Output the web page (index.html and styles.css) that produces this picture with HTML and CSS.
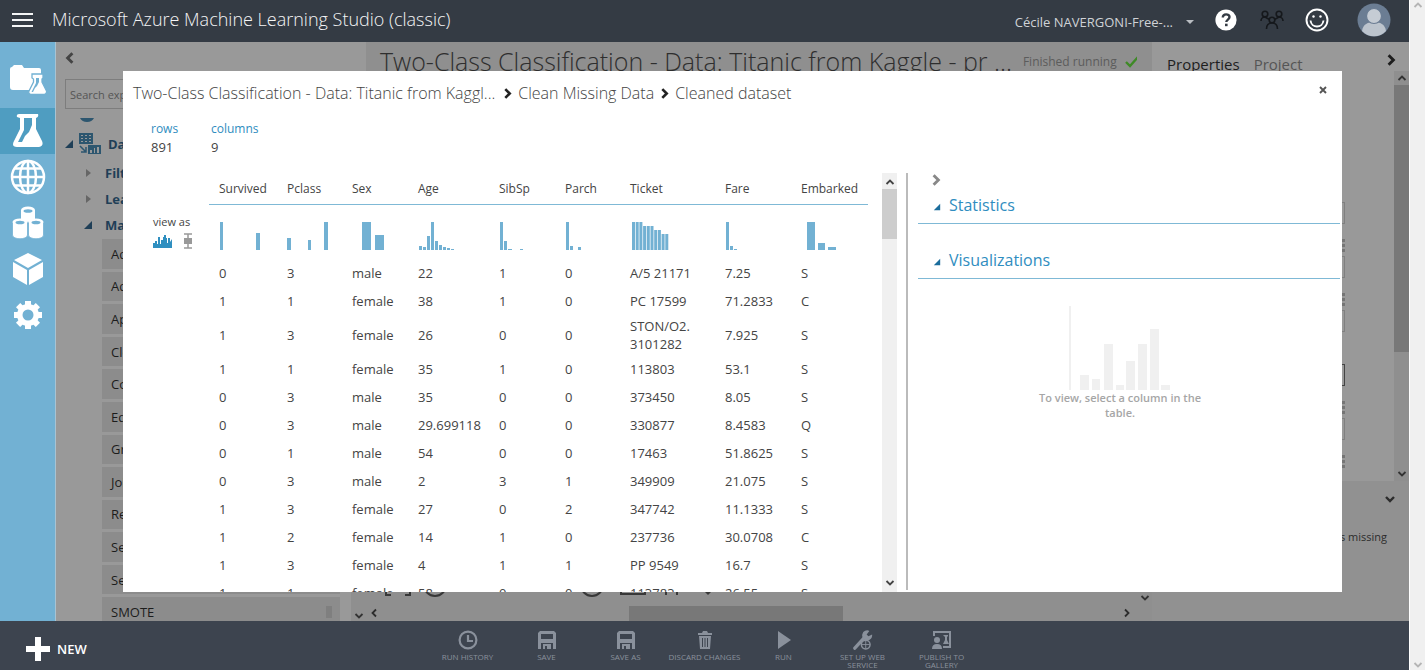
FILE: index.html
```html
<!DOCTYPE html>
<html lang="en">
<head>
<meta charset="utf-8">
<title>Microsoft Azure Machine Learning Studio (classic)</title>
<link rel="stylesheet" href="styles.css">
</head>
<body>
<svg class="defs" aria-hidden="true">
  <symbol id="chev-r" viewBox="0 0 10 10"><path d="M3 1l4 4-4 4" fill="none" stroke="currentColor" stroke-width="2.4"/></symbol>
  <symbol id="chev-l" viewBox="0 0 10 10"><path d="M7 1L3 5l4 4" fill="none" stroke="currentColor" stroke-width="2.4"/></symbol>
  <symbol id="thin-u" viewBox="0 0 10 10"><path d="M1.500 7L5 3.500 8.500 7" fill="none" stroke="currentColor" stroke-width="1.800"/></symbol>
  <symbol id="thin-d" viewBox="0 0 10 10"><path d="M1.500 3L5 6.500 8.500 3" fill="none" stroke="currentColor" stroke-width="1.800"/></symbol>
  <symbol id="thin-l" viewBox="0 0 10 10"><path d="M7 1.500L3.500 5 7 8.500" fill="none" stroke="currentColor" stroke-width="1.800"/></symbol>
  <symbol id="thin-r" viewBox="0 0 10 10"><path d="M3 1.500L6.500 5 3 8.500" fill="none" stroke="currentColor" stroke-width="1.800"/></symbol>
  <symbol id="tri-open" viewBox="0 0 10 10"><path d="M9 1v8H1z" fill="currentColor"/></symbol>
  <symbol id="tri-closed" viewBox="0 0 10 10"><path d="M3 1l5 4-5 4z" fill="currentColor"/></symbol>
  <symbol id="dots" viewBox="0 0 3 13"><path d="M0 0h3v3H0zM0 5h3v3H0zM0 10h3v3H0z" fill="currentColor"/></symbol>
  <symbol id="floppy" viewBox="0 0 20 20"><path fill="currentColor" fill-rule="evenodd" d="M3 1h14l2 2v16h-3v-6H4v6H1V3zM4 4v5h12V4zM6 14h8v5h-4v-3H8v3H6z"/></symbol>
</svg>

<div class="window">
<div class="app">
  <header class="topbar">
    <button class="icon-btn menu" aria-label="Menu"><svg width="22" height="16" viewBox="0 0 22 16"><path d="M0 2h21M0 8h21M0 14h21" stroke="#f4f5f6" stroke-width="2"/></svg></button>
    <h1 class="brand">Microsoft Azure Machine Learning Studio (classic)</h1>
    <button class="workspace">Cécile NAVERGONI-Free-...<svg width="8" height="5" viewBox="0 0 8 5"><path d="M0 0h8L4 4z" fill="#b9bdc2"/></svg></button>
    <button class="icon-btn help" aria-label="Help"><svg width="22" height="22" viewBox="0 0 22 22"><circle cx="11" cy="11" r="10.600" fill="#fff"/><path d="M7.800 8.600c0-4.300 6.700-4 6.700-.5 0 2.500-3.200 2.500-3.200 5" fill="none" stroke="#343b44" stroke-width="2.400"/><path d="M10 14.700h2.600v2.500H10z" fill="#343b44"/></svg></button>
    <button class="icon-btn people" aria-label="Community"><svg width="24" height="22" viewBox="0 0 24 22" fill="none" stroke="#15181c" stroke-width="1.600"><circle cx="5" cy="5" r="2.800"/><circle cx="19" cy="5" r="2.800"/><circle cx="12" cy="11" r="2.800"/><path d="M1 12c0-2 1.500-4 4-4l4.500 2.500M23 12c0-2-1.500-4-4-4l-4.500 2.500M6.500 20c0-4 2-6 5.500-6s5.500 2 5.500 6"/></svg></button>
    <button class="icon-btn smile" aria-label="Feedback"><svg width="24" height="24" viewBox="0 0 24 24" fill="none" stroke="#fff" stroke-width="1.900"><circle cx="12" cy="12" r="10.500"/><path d="M5.500 12.500c1 8 12 8 13 0"/><circle cx="8.500" cy="8.500" r="1.200" fill="#fff" stroke="none"/><circle cx="15.500" cy="8.500" r="1.200" fill="#fff" stroke="none"/></svg></button>
    <button class="icon-btn avatar" aria-label="Account"><svg width="34" height="34" viewBox="0 0 34 34"><circle cx="17" cy="17" r="16.500" fill="#6b7d93"/><path d="M5 28c1-7 6-9 12-9s11 2 12 9c-6 7-18 7-24 0z" fill="#bcc4cd"/><circle cx="17" cy="13" r="7.500" fill="#c5ccd4" stroke="#6b7d93" stroke-width="1.200"/></svg></button>
  </header>

  <div class="main">
    <nav class="rail" aria-label="Sections">
      <a href="#projects" class="projects" aria-label="Projects"><svg width="38" height="32" viewBox="0 0 38 32"><path fill="#fff" d="M1 5q0-2 2-2l2-2h8l2 3h15q2 0 2 2v20H4q-3 0-3-3z"/><path d="M23 10h11v4l-1 1v3l4.500 9q.5 3-2 3.500H22q-3-.5-2-3.500l4.500-9v-3l-1.500-1z" fill="#fff" stroke="#72b1d3" stroke-width="1.300"/><path d="M27 14h3v4l-2 4-2 2-2 4h-1.500l4.500-9z" fill="#72b1d3"/></svg></a>
      <a href="#experiments" class="active" aria-label="Experiments" aria-current="page"><svg width="32" height="36" viewBox="0 0 32 36"><path fill="#fff" fill-rule="evenodd" d="M7 1q-3 0-2 3l3 1v11L2 28q-3 6 3 6h22q5-1 3-6l-6-12V5q3-1 2-4zM12 5h8v7l-3 7-4 4-3 6H6l6-12z"/></svg></a>
      <a href="#web-services" aria-label="Web services"><svg width="36" height="36" viewBox="0 0 36 36" fill="none" stroke="#fff" stroke-width="2.500"><circle cx="18" cy="18" r="16"/><ellipse cx="18" cy="18" rx="8" ry="16"/><path d="M18 2v32M2 18h32M5 9.500h26M5 26.500h26"/></svg></a>
      <a href="#datasets" aria-label="Datasets"><svg width="32" height="34" viewBox="0 0 32 34" fill="#fff"><path d="M9 4v10c0 4 14 4 14 0V4z"/><ellipse cx="16" cy="4" rx="7" ry="3.500"/><path d="M.5 16v13c0 5 15 5 15 0V16zM16.500 16v13c0 5 15 5 15 0V16z" stroke="#72b1d3" stroke-width=".8"/><ellipse cx="8" cy="16" rx="7.500" ry="3.500"/><ellipse cx="24" cy="16" rx="7.500" ry="3.500"/><g fill="#72b1d3"><ellipse cx="16" cy="5" rx="4.500" ry="1.800"/><ellipse cx="8" cy="16.500" rx="4.500" ry="1.800"/><ellipse cx="24" cy="16.500" rx="4.500" ry="1.800"/></g></svg></a>
      <a href="#models" aria-label="Trained models"><svg width="32" height="34" viewBox="0 0 32 34" fill="#fff"><path d="M16 1l14 7-14 8L2 8zM1 10l14 8v15L1 25zM31 10l-14 8v15l14-8z"/></svg></a>
      <a href="#settings" aria-label="Settings"><svg width="30" height="30" viewBox="0 0 30 30"><g fill="#fff"><path d="M12 1h6v28h-6z"/><path d="M12 1h6v28h-6z" transform="rotate(45 15 15)"/><path d="M12 1h6v28h-6z" transform="rotate(90 15 15)"/><path d="M12 1h6v28h-6z" transform="rotate(135 15 15)"/><circle cx="15" cy="15" r="11"/></g><circle cx="15" cy="15" r="5.500" fill="#72b1d3"/></svg></a>
    </nav>

    <aside class="toolbox" aria-label="Experiment items">
      <button class="icon-btn collapse" aria-label="Collapse"><svg width="12" height="12"><use href="#chev-l"/></svg></button>
      <input class="search" type="search" placeholder="Search experiment items" aria-label="Search experiment items">
      <div class="toolbox-body">
        <div class="tree">
          <svg class="tree-cut" width="14" height="4" viewBox="0 0 14 4"><path d="M0 0h14q-2 4-7 4T0 0z" fill="#2d566f"/></svg>
          <button class="group"><svg width="10" height="10"><use href="#tri-open"/></svg><svg width="22" height="22" viewBox="0 0 22 22"><path fill="#2d566f" fill-rule="evenodd" d="M0 0h14v11H0zM2 2v1h2V2zM6 2v1h2V2zM10 2v1h2V2zM2 5v1h2V5zM6 5v1h2V5zM10 5v1h2V5zM2 8v1h2V8zM6 8v1h2V8zM10 8v1h2V8zM9 12h13v9H9zM11 17v3h2v-3zM15 15v5h1v-5zM18 14v6h2v-6z"/><path d="M1 13l6 6M7 14v5H2" stroke="#2d566f" stroke-width="1.500" fill="none"/></svg>Data Transformation</button>
          <button class="branch closed"><svg width="10" height="10"><use href="#tri-closed"/></svg>Filter</button>
          <button class="branch closed"><svg width="10" height="10"><use href="#tri-closed"/></svg>Learning with Counts</button>
          <button class="branch"><svg width="10" height="10"><use href="#tri-open"/></svg>Manipulation</button>
          <ul class="modules">
            <li>Add Columns</li><li>Add Rows</li><li>Apply SQL Transformation</li><li>Clean Missing Data</li><li>Convert to Indicator Values</li><li>Edit Metadata</li><li>Group Categorical Values</li><li>Join Data</li><li>Remove Duplicate Rows</li><li>Select Columns in Dataset</li><li>Select Columns Transform</li><li>SMOTE<span class="grip"></span></li>
          </ul>
        </div>
        <div class="vscroll toolbox-scroll"><svg width="10" height="10"><use href="#thin-u"/></svg><svg width="10" height="10"><use href="#thin-d"/></svg></div>
      </div>
    </aside>

    <section class="canvas" aria-label="Experiment canvas">
      <div class="canvas-main">
        <div class="canvas-head">
          <h2>Two-Class Classification - Data: Titanic from Kaggle - pr ...</h2>
          <span class="status">Finished running <svg width="14" height="12" viewBox="0 0 14 12"><path d="M1 6l4 4 8-9" fill="none" stroke="#3e8a26" stroke-width="2.400"/></svg></span>
        </div>
        <div class="canvas-tools"><svg width="340" height="26" viewBox="0 0 340 26" fill="none" stroke="#383838" stroke-width="2"><path d="M0 7V1h5M20 1h5v6M1 18v6h5M20 24h5v-6"/><circle cx="50" cy="14" r="11"/><circle cx="207" cy="14" r="11"/><path d="M236 4h24v19h-24zM281 10v14M292 10v14"/><path d="M318 19h10l-5 5z" fill="#383838" stroke="none"/></svg></div>
        <div class="hscroll"><svg width="10" height="10"><use href="#thin-l"/></svg><span class="hthumb"></span><svg width="10" height="10"><use href="#thin-r"/></svg></div>
      </div>
      <div class="vscroll canvas-v"><svg width="10" height="10"><use href="#thin-d"/></svg></div>
    </section>

    <aside class="props" aria-label="Properties">
      <div class="props-tabs"><button class="tab on">Properties</button><button class="tab">Project</button><button class="icon-btn expand" aria-label="Collapse panel"><svg width="12" height="12"><use href="#chev-r"/></svg></button></div>
      <div class="props-body">
        <form class="fields">
          <div class="field"><input aria-label="Columns to be cleaned"></div>
          <div class="field"><svg width="3" height="13"><use href="#dots"/></svg><input aria-label="Minimum missing value ratio"></div>
          <div class="field"><svg width="3" height="13"><use href="#dots"/></svg><input aria-label="Maximum missing value ratio"></div>
          <div class="field strong"><input aria-label="Cleaning mode"></div>
          <div class="field"><svg width="3" height="13"><use href="#dots"/></svg><input aria-label="Replacement value"></div>
          <div class="field"><svg width="3" height="13"><use href="#dots"/></svg></div>
        </form>
        <div class="vscroll"><svg width="10" height="10"><use href="#thin-u"/></svg><span class="vthumb"></span><svg width="10" height="10"><use href="#thin-d"/></svg></div>
      </div>
      <div class="quick-help">
        <button class="icon-btn" aria-label="Collapse help"><svg width="10" height="10" viewBox="0 0 10 10"><path d="M1 3l4 4 4-4" fill="none" stroke="currentColor" stroke-width="2.400"/></svg></button>
        <p>Specifies how to handle values missing</p>
      </div>
    </aside>
  </div>

  <footer class="commands">
    <button class="new"><svg width="24" height="24" viewBox="0 0 24 24"><path d="M9 0h6v9h9v6h-9v9H9v-9H0V9h9z" fill="#fff"/></svg>NEW</button>
    <div class="actions">
      <button class="wide"><svg width="20" height="20" viewBox="0 0 20 20" fill="none" stroke="currentColor"><circle cx="10" cy="10" r="8.400" stroke-width="2.200"/><path d="M10 5v6h5" stroke-width="2.200"/></svg>RUN HISTORY</button>
      <button><svg width="20" height="20"><use href="#floppy"/></svg>SAVE</button>
      <button><svg width="20" height="20"><use href="#floppy"/></svg>SAVE AS</button>
      <button class="wide"><svg width="20" height="20" viewBox="0 0 20 20"><path fill="currentColor" fill-rule="evenodd" d="M3 3h4l1-2h4l1 2h4v2H3zM4 6h12l-1 13H5zM7 8v9h1V8zM9.500 8v9h1V8zM12 8v9h1V8z"/></svg>DISCARD CHANGES</button>
      <button><svg width="20" height="20" viewBox="0 0 20 20"><path fill="currentColor" d="M4 1l13 9-13 9z"/></svg>RUN</button>
      <button><svg width="22" height="22" viewBox="0 0 22 22"><path d="M2 20l10-11" stroke="currentColor" stroke-width="3.600" stroke-linecap="round"/><path d="M18 1a5.500 5.500 0 1 0 3 4l-4 2-2-2z" fill="currentColor"/><circle cx="14" cy="16" r="4.800" fill="#3d444f" stroke="currentColor" stroke-width="1.600"/><path d="M9.500 16h9M14 11.500v9" stroke="currentColor"/></svg>SET UP WEB SERVICE</button>
      <button><svg width="20" height="20" viewBox="0 0 20 20"><path d="M2 6V2h16v15h-7" fill="none" stroke="currentColor" stroke-width="2"/><circle cx="5" cy="10" r="3" fill="currentColor"/><path d="M0 19q0-5 5-5t5 5zM11 5h5v1l-1 1v3l2 4h-6l2-4V7z" fill="currentColor"/></svg>PUBLISH TO GALLERY</button>
    </div>
  </footer>

  <div class="dialog" role="dialog" aria-label="Cleaned dataset">
    <div class="dialog-head">
      <nav class="crumbs" aria-label="Breadcrumb"><span class="crumb-first">Two-Class Classification - Data: Titanic from Kaggl...</span><svg width="11" height="11"><use href="#chev-r"/></svg><span>Clean Missing Data</span><svg width="11" height="11"><use href="#chev-r"/></svg><span>Cleaned dataset</span></nav>
      <button class="icon-btn close" aria-label="Close"><svg width="8" height="8" viewBox="0 0 8 8"><path d="M1 1l6 6M7 1L1 7" stroke="#555" stroke-width="1.900"/></svg></button>
    </div>
    <dl class="summary"><div><dt>rows</dt><dd>891</dd></div><div><dt>columns</dt><dd>9</dd></div></dl>
    <div class="dialog-body">
      <div class="view-as">
        <span>view as</span>
        <div class="view-icons">
          <button class="icon-btn" aria-label="Histogram"><svg width="19" height="13" viewBox="0 0 19 13"><path fill="#2f8fc0" d="M0 13V8h2V6h2v3h1V2h2v7h1V5h2V2h1V0h2v3h1v5h1V3h2v4l2-3v9z"/></svg></button>
          <button class="icon-btn" aria-label="Box plot"><svg width="8" height="16" viewBox="0 0 8 16"><path d="M0 1h8M0 15h8M4 1v14" stroke="#999" stroke-width="1.500"/><path d="M0 5h8v6H0z" fill="#999"/></svg></button>
        </div>
      </div>
      <div class="table-wrap">
      <table>
        <colgroup><col class="c1"><col class="c2"><col class="c3"><col class="c4"><col class="c5"><col class="c6"><col class="c7"><col class="c8"><col class="c9"></colgroup>
        <thead><tr><th>Survived</th><th>Pclass</th><th>Sex</th><th>Age</th><th>SibSp</th><th>Parch</th><th>Ticket</th><th>Fare</th><th>Embarked</th></tr></thead>
        <tbody>
          <tr class="charts">
            <td><svg width="42" height="28"><path d="M1 0h3v28H1zM37 11h4v17h-4z"/></svg></td>
            <td><svg width="42" height="28"><path d="M0 16h4v12H0zM21 18h3v10h-3zM37 0h4v28h-4z"/></svg></td>
            <td><svg width="42" height="28"><path d="M10 0h9v28h-9zM23 13h9v15h-9z"/></svg></td>
            <td><svg width="42" height="28"><path d="M1 24h3v4H1zM5 25h3v3H5zM9 14h3v14H9zM13 0h3v28h-3zM17 19h3v9h-3zM21 23h3v5h-3zM25 25h3v3h-3zM29 26h3v2h-3zM33 27h3v1h-3z"/></svg></td>
            <td><svg width="42" height="28"><path d="M1 0h3v28H1zM5 19h3v9H5zM9 27h4v1H9zM21 27h3v1h-3z"/></svg></td>
            <td><svg width="42" height="28"><path d="M1 0h3v28H1zM5 24h3v4H5zM13 25h3v3h-3z"/></svg></td>
            <td><svg width="42" height="28"><path d="M2 0h3v28H2zM5.700 0h3v28h-3zM9.400 0h3v28h-3zM13.100 4h3v24h-3zM16.800 4h3v24h-3zM20.500 4h3v24h-3zM24.200 8h3v20h-3zM27.900 8h3v20h-3zM31.600 12h3v16h-3zM35.300 12h3v16h-3z"/></svg></td>
            <td><svg width="42" height="28"><path d="M1 0h3v28H1zM5 24h3v4H5zM9 27h3v1H9z"/></svg></td>
            <td><svg width="42" height="28"><path d="M6 0h8v28H6zM17 21h7v7h-7zM27 25h8v3h-8z"/></svg></td>
          </tr>
          <tr><td>0</td><td>3</td><td>male</td><td>22</td><td>1</td><td>0</td><td>A/5 21171</td><td>7.25</td><td>S</td></tr>
          <tr><td>1</td><td>1</td><td>female</td><td>38</td><td>1</td><td>0</td><td>PC 17599</td><td>71.2833</td><td>C</td></tr>
          <tr><td>1</td><td>3</td><td>female</td><td>26</td><td>0</td><td>0</td><td>STON/O2. 3101282</td><td>7.925</td><td>S</td></tr>
          <tr><td>1</td><td>1</td><td>female</td><td>35</td><td>1</td><td>0</td><td>113803</td><td>53.1</td><td>S</td></tr>
          <tr><td>0</td><td>3</td><td>male</td><td>35</td><td>0</td><td>0</td><td>373450</td><td>8.05</td><td>S</td></tr>
          <tr><td>0</td><td>3</td><td>male</td><td>29.699118</td><td>0</td><td>0</td><td>330877</td><td>8.4583</td><td>Q</td></tr>
          <tr><td>0</td><td>1</td><td>male</td><td>54</td><td>0</td><td>0</td><td>17463</td><td>51.8625</td><td>S</td></tr>
          <tr><td>0</td><td>3</td><td>male</td><td>2</td><td>3</td><td>1</td><td>349909</td><td>21.075</td><td>S</td></tr>
          <tr><td>1</td><td>3</td><td>female</td><td>27</td><td>0</td><td>2</td><td>347742</td><td>11.1333</td><td>S</td></tr>
          <tr><td>1</td><td>2</td><td>female</td><td>14</td><td>1</td><td>0</td><td>237736</td><td>30.0708</td><td>C</td></tr>
          <tr><td>1</td><td>3</td><td>female</td><td>4</td><td>1</td><td>1</td><td>PP 9549</td><td>16.7</td><td>S</td></tr>
          <tr><td>1</td><td>1</td><td>female</td><td>58</td><td>0</td><td>0</td><td>113783</td><td>26.55</td><td>S</td></tr>
        </tbody>
      </table>
      </div>
      <div class="vscroll light"><svg width="10" height="10"><use href="#thin-u"/></svg><span class="vthumb"></span><svg width="10" height="10"><use href="#thin-d"/></svg></div>
      <div class="details">
        <button class="icon-btn detail-toggle" aria-label="Collapse details"><svg width="12" height="12"><use href="#chev-r"/></svg></button>
        <button class="section first"><svg width="8" height="8"><use href="#tri-open"/></svg>Statistics</button>
        <button class="section"><svg width="8" height="8"><use href="#tri-open"/></svg>Visualizations</button>
        <div class="empty">
          <svg width="102" height="84" viewBox="0 0 102 84"><path fill="#f0f0f0" d="M0 0h2v84H0zM11 69h9v15h-9zM23 73h8v11h-8zM35 38h9v46h-9zM47 79h8v5h-8zM57 55h9v29h-9zM69 38h9v46h-9zM81 23h9v61h-9zM92 79h9v5h-9z"/></svg>
          <p>To view, select a column in the table.</p>
        </div>
      </div>
    </div>
  </div>
</div>
<div class="page-scroll" aria-hidden="true"><svg width="10" height="10"><use href="#thin-u"/></svg><svg width="10" height="10"><use href="#thin-d"/></svg></div>
</div>
</body>
</html>
```
FILE: styles.css
```css
* { box-sizing: border-box; }
body { margin: 0; font: 13px/18px "Open Sans", "Noto Sans", sans-serif; color: #444; overflow: hidden; }
button { font: inherit; color: inherit; background: none; border: 0; padding: 0; text-align: left; white-space: nowrap; }
svg { display: block; flex: none; }
h1, h2, p, dl, dd, ul { margin: 0; padding: 0; }
ul { list-style: none; }
.defs { position: absolute; width: 0; height: 0; }
.icon-btn { display: flex; align-items: center; justify-content: center; }

.window { display: flex; height: 100vh; }
.app { position: relative; flex: 1; min-width: 0; display: flex; flex-direction: column; }
.page-scroll { width: 16px; background: #f0f0f0; border-left: 1px solid #fff; display: flex; flex-direction: column; justify-content: space-between; align-items: center; color: #b5b5b5; }

.topbar { height: 42px; flex: none; display: flex; align-items: center; background: #343b44; padding: 0 18px 0 12px; }
.menu, .help, .smile, .avatar { padding-bottom: 2px; }
.brand { flex: 1; margin-left: 18px; font-size: 18px; line-height: 24px; font-weight: 300; color: #f4f5f6; padding-bottom: 5px; white-space: nowrap; }
.workspace { display: flex; align-items: center; gap: 13px; color: #cfd2d6; margin-right: 21px; padding-top: 2px; }
.people { margin-left: 23px; padding-bottom: 3px; }
.smile { margin-left: 21px; }
.avatar { margin-left: 28px; }

.main { flex: 1; min-height: 0; display: flex; background: #999; }
.rail { width: 56px; flex: none; background: #72b1d3; border-right: 1px solid #a9c3d2; padding-top: 15px; display: flex; flex-direction: column; }
.rail a { height: 46px; display: flex; align-items: center; justify-content: center; }
.rail .projects { height: 51px; padding-bottom: 5px; }
.rail .active { background: #4f9dc1; }

.toolbox { width: 310px; flex: none; display: flex; flex-direction: column; }
.collapse { width: 28px; height: 32px; }
.search { margin: 5px 22px 0 9px; height: 30px; padding: 0 4px; border: 1px solid #7d7d7d; background: transparent; font: inherit; font-size: 11px; border-radius: 0; }
.search::placeholder { color: #555; }
.toolbox-body { flex: 1; min-height: 0; display: flex; margin-top: 9px; overflow: hidden; }
.tree { flex: 1; min-width: 0; color: #1f3f57; overflow: hidden; }
.tree-cut { margin-left: 24px; }
.tree button { display: flex; align-items: center; height: 26px; font-weight: 700; }
.tree .group { height: 38px; gap: 5px; padding: 5px 0 0 8px; }
.group svg:nth-child(2) { margin-right: 2px; }
.branch { gap: 12px; padding-left: 27px; }
.branch.closed svg { color: #666; }
.modules { display: grid; grid-auto-rows: 1fr; gap: 3px; height: 388px; margin: 1px 11px 0 46px; color: #1c1c1c; }
.modules li { display: flex; align-items: center; justify-content: space-between; background: #8c8c8c; padding: 0 8px 0 9px; }
.grip { width: 6px; height: 12px; background: #7f7f7f; }
.vscroll { width: 15px; flex: none; background: #8f8f8f; color: #333; display: flex; flex-direction: column; align-items: center; justify-content: space-between; padding: 2px 0; }
.toolbox-scroll { padding-bottom: 0; }

.canvas { flex: 1; min-width: 0; display: flex; background: #8f8f8f; }
.canvas-main { flex: 1; min-width: 0; display: flex; flex-direction: column; }
.canvas-head { flex: 1; display: flex; align-items: flex-start; white-space: nowrap; padding-left: 14px; }
.canvas-head h2 { font-size: 25px; line-height: 38px; font-weight: 300; color: #2e2e2e; }
.status { display: flex; gap: 8px; align-items: center; margin-left: 11px; font-size: 12px; line-height: 39px; color: #5c5c5c; }
.canvas-tools { padding: 0 0 8px 19px; }
.hscroll { height: 16px; color: #2c2c2c; display: flex; align-items: center; padding: 0 5px 0 3px; }
.hthumb { width: 28%; height: 15px; margin: 0 auto 0 250px; background: #787878; }
.canvas-v { justify-content: flex-end; padding-bottom: 18px; }

.props { width: 257px; flex: none; display: flex; flex-direction: column; }
.props-tabs { height: 29px; flex: none; display: flex; align-items: flex-start; gap: 14px; padding: 10px 12px 0 15px; font-size: 15px; line-height: 24px; color: #555; }
.tab.on { color: #1e1e1e; }
.expand { margin-left: auto; height: 16px; color: #1e1e1e; }
.props-body { flex: 1; display: flex; min-height: 0; overflow: hidden; }
.fields { flex: 1; padding: 99px 49px 0 15px; color: #757575; }
.field { height: 54px; display: flex; flex-direction: column; align-items: flex-end; justify-content: flex-end; gap: 4px; }
.field:last-child { height: 28px; }
.field input { width: 100%; height: 22px; border: 1px solid #808080; background: transparent; }
.field.strong input { border-color: #444; }
.vthumb { width: 100%; background: #787878; }
.props-body .vthumb { flex: 0 0 267px; margin: 2px 0 auto; }
.quick-help { height: 140px; flex: none; background: #919191; color: #2c2c2c; padding: 13px 22px 0 0; display: flex; flex-direction: column; align-items: flex-end; gap: 24px; font-size: 11px; white-space: nowrap; }
.quick-help button { margin-right: -8px; }

.commands { height: 49px; flex: none; display: grid; grid-template-columns: 1fr auto 1fr; background: #3d444f; }
.new { display: flex; align-items: center; gap: 7px; padding: 6px 0 0 26px; font-weight: 600; color: #fff; }
.actions { display: flex; color: #8a919c; font-size: 8px; line-height: 8px; }
.actions button { width: 79px; display: flex; flex-direction: column; align-items: center; gap: 3px; padding: 9px 12px 0; text-align: center; white-space: normal; }
.actions .wide { padding-left: 0; padding-right: 0; }
.actions svg { height: 20px; }

.dialog { position: absolute; top: 71px; right: 67px; bottom: 78px; left: 123px; background: #fff; display: flex; flex-direction: column; overflow: hidden; }
.dialog-head { display: flex; justify-content: space-between; padding: 11px 15px 0 10px; }
.crumbs { display: flex; align-items: center; gap: 5px; font-size: 16px; line-height: 22px; font-weight: 300; white-space: nowrap; }
.crumbs svg { color: #222; }
.crumb-first { margin-right: 2px; }
.close { height: 16px; }
.summary { display: flex; padding: 15px 0 0 28px; line-height: 19px; }
.summary div { min-width: 60px; }
dt { color: #2f8dc0; font-size: 12px; }
.dialog-body { flex: 1; min-height: 0; display: flex; margin-top: 16px; }
.view-as { width: 86px; flex: none; padding: 41px 0 0 30px; font-size: 11px; line-height: 16px; }
.view-icons { display: flex; align-items: center; gap: 12px; margin-top: 3px; }
.table-wrap { flex: 1; overflow: hidden; }
table { width: 659px; border-collapse: collapse; table-layout: fixed; }
.c1 { width: 68px; } .c2 { width: 65px; } .c3 { width: 66px; } .c4 { width: 81px; } .c5 { width: 66px; }
.c6 { width: 65px; } .c7 { width: 95px; } .c8 { width: 76px; } .c9 { width: 77px; }
th, td { padding: 2px 0 2px 10px; text-align: left; font-weight: 400; height: 28px; }
th { height: 31px; padding-top: 3px; border-bottom: 1px solid #7fb9d6; font-size: 12px; }
td:nth-child(7) { padding-right: 12px; }
.charts td { height: 55px; padding-top: 11px; }
.charts svg { fill: #72b1d3; }
.light { background: #f0f0f0; color: #444; padding: 4px 0; }
.light .vthumb { flex: 0 0 50px; background: #cdcdcd; margin: 2px 0 auto; }
.details { width: 434px; flex: none; margin: 0 2px 2px 9px; padding-left: 10px; border-left: 2px solid #bbb; }
.detail-toggle { margin: 1px 0 0 12px; color: #888; }
.section { display: flex; align-items: center; gap: 8px; width: 100%; height: 55px; padding: 17px 0 0 15px; border-bottom: 1px solid #7fb9d6; font-size: 16px; color: #2f8dc0; }
.section.first { height: 38px; padding-top: 0; }
.section svg { color: #1b6d9c; margin-top: 4px; }
.empty { display: flex; flex-direction: column; align-items: center; padding: 27px 18px 0 0; color: #a6a6a6; font-size: 11px; line-height: 15px; font-weight: 600; text-align: center; }
.empty p { width: 180px; }
```
